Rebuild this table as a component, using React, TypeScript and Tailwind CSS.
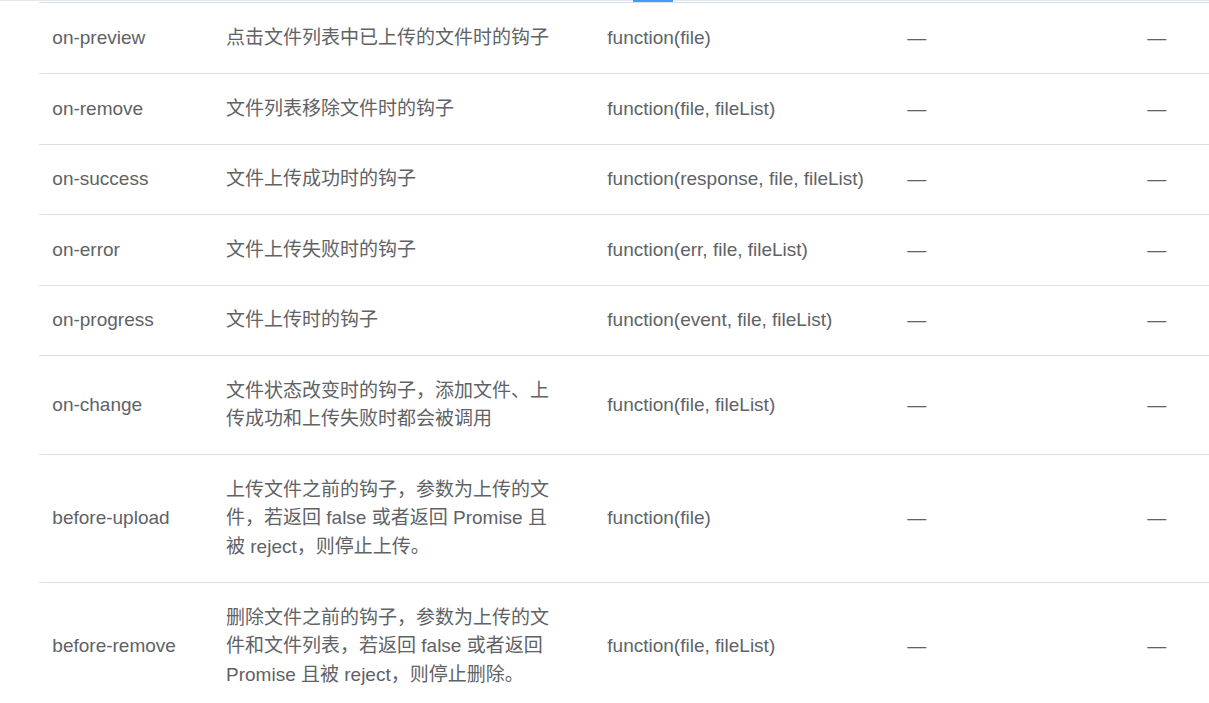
import React from "react";

type Row = { name: string; desc: string; type: string };

const rows: Row[] = [
  { name: "on-preview", desc: "点击文件列表中已上传的文件时的钩子", type: "function(file)" },
  { name: "on-remove", desc: "文件列表移除文件时的钩子", type: "function(file, fileList)" },
  { name: "on-success", desc: "文件上传成功时的钩子", type: "function(response, file, fileList)" },
  { name: "on-error", desc: "文件上传失败时的钩子", type: "function(err, file, fileList)" },
  { name: "on-progress", desc: "文件上传时的钩子", type: "function(event, file, fileList)" },
  { name: "on-change", desc: "文件状态改变时的钩子，添加文件、上传成功和上传失败时都会被调用", type: "function(file, fileList)" },
  { name: "before-upload", desc: "上传文件之前的钩子，参数为上传的文件，若返回 false 或者返回 Promise 且被 reject，则停止上传。", type: "function(file)" },
  { name: "before-remove", desc: "删除文件之前的钩子，参数为上传的文件和文件列表，若返回 false 或者返回 Promise 且被 reject，则停止删除。", type: "function(file, fileList)" },
];

export default function App() {
  return (
    <div
      className="w-[1209px] h-[703px] overflow-hidden bg-white text-[#606266] text-[19px] leading-[28.67px]"
      style={{ fontFamily: '"Liberation Sans", "Noto Sans CJK SC", sans-serif' }}
    >
      <div className="relative h-[1px] bg-[#e4e7ed]">
        <div className="absolute left-[633px] top-0 w-[40px] h-[2px] bg-[#409eff]" />
      </div>
      <div className="ml-[39px] w-[1300px] border-t border-[#dcdfe6] mt-[1px] pt-[1px]">
        {rows.map((r) => (
          <div key={r.name} className="flex items-center border-b border-[#dcdfe6]">
            <div className="w-[173.7px] shrink-0 px-[13.33px] py-[20.4px]">{r.name}</div>
            <div className="w-[381.3px] shrink-0 px-[13.33px] py-[20.4px]">
              <div className="max-w-[330px]">{r.desc}</div>
            </div>
            <div className="w-[300px] shrink-0 px-[13.33px] py-[20.4px]">{r.type}</div>
            <div className="w-[240px] shrink-0 px-[13.33px] py-[20.4px]">—</div>
            <div className="w-[200px] shrink-0 px-[13.33px] py-[20.4px]">—</div>
          </div>
        ))}
      </div>
    </div>
  );
}
